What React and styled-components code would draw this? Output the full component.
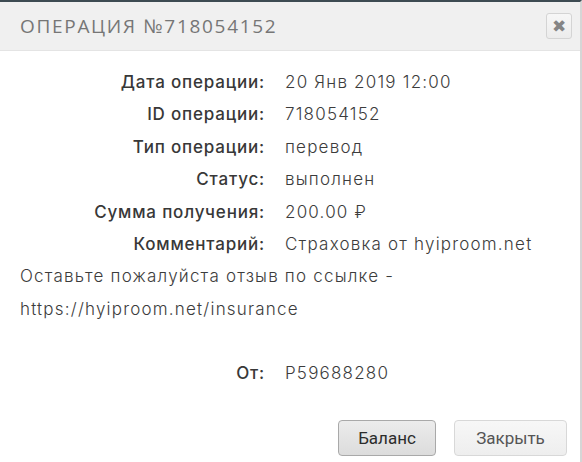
import React from 'react'
import styled, { createGlobalStyle } from 'styled-components'

const GlobalStyle = createGlobalStyle`
  html, body {
    margin: 0;
    padding: 0;
    background: #ffffff;
  }
  body {
    font-family: Inter, "Noto Sans", sans-serif;
  }
`

const Dialog = styled.div`
  width: 582px;
  height: 462px;
  box-sizing: border-box;
  border-top: 2px solid #3d4b52;
  border-right: 2px solid #d6d6d6;
  background: #fff;
  display: flex;
  flex-direction: column;
  overflow: hidden;
`

const TitleBar = styled.div`
  height: 48px;
  background: #f0f0f0;
  display: flex;
  align-items: center;
  justify-content: space-between;
  padding: 0 8px 0 20px;
  border-bottom: 1px solid #e4e4e4;
`

const Title = styled.h1`
  margin: 0;
  font-family: "Open Sans", sans-serif;
  font-weight: 400;
  font-size: 19px;
  letter-spacing: 1.7px;
  color: #767676;
`

const CloseButton = styled.button`
  width: 26px;
  height: 26px;
  padding: 0;
  border: 1px solid #d4d4d4;
  border-radius: 3px;
  background: linear-gradient(#f7f7f7, #ececec);
  display: flex;
  align-items: center;
  justify-content: center;
  color: #858585;
  font-size: 17px;
  line-height: 1;
`

const Body = styled.div`
  flex: 1;
  padding: 15px 20px 0;
  color: #3a3a3a;
  font-size: 17px;
`

const Grid = styled.div`
  display: grid;
  grid-template-columns: 245px 1fr;
  column-gap: 20px;
  line-height: 32.4px;
`

const Label = styled.div`
  text-align: right;
  font-weight: 500;
  letter-spacing: 0.8px;
  color: #383838;
`

const Value = styled.div`
  font-weight: 300;
  letter-spacing: 1.2px;
  color: #3c3c3c;
`

const Note = styled.p`
  margin: 0 0 32px;
  font-weight: 300;
  letter-spacing: 1.2px;
  line-height: 32.4px;
  color: #3c3c3c;
`

const Footer = styled.div`
  display: flex;
  justify-content: flex-end;
  gap: 18px;
  padding: 0 13px 6px 0;
`

const Button = styled.button`
  height: 36px;
  padding: 0 ${(p) => (p.$wide ? 20 : 19)}px;
  min-width: ${(p) => (p.$wide ? 113 : 98)}px;
  font-family: Roboto, "Liberation Sans", sans-serif;
  font-size: 17px;
  border-radius: 4px;
  border: 1px solid ${(p) => (p.$primary ? '#a9a9a9' : '#d8d8d8')};
  color: ${(p) => (p.$primary ? '#2c2c2c' : '#555')};
  background: ${(p) =>
    p.$primary
      ? 'linear-gradient(#ececec, #dcdcdc)'
      : 'linear-gradient(#f7f7f7, #eeeeee)'};
`

const rows = [
  ['Дата операции:', '20 Янв 2019 12:00'],
  ['ID операции:', '718054152'],
  ['Тип операции:', 'перевод'],
  ['Статус:', 'выполнен'],
  ['Сумма получения:', '200.00 ₽'],
  ['Комментарий:', 'Страховка от hyiproom.net'],
]

export default function App() {
  return (
    <>
      <GlobalStyle />
      <Dialog>
        <TitleBar>
          <Title>ОПЕРАЦИЯ №718054152</Title>
          <CloseButton aria-label="close">✖</CloseButton>
        </TitleBar>
        <Body>
          <Grid>
            {rows.map(([l, v]) => (
              <React.Fragment key={l}>
                <Label>{l}</Label>
                <Value>{v}</Value>
              </React.Fragment>
            ))}
          </Grid>
          <Note>
            Оставьте пожалуйста отзыв по ссылке -<br />
            https://hyiproom.net/insurance
          </Note>
          <Grid>
            <Label>От:</Label>
            <Value>P59688280</Value>
          </Grid>
        </Body>
        <Footer>
          <Button $primary>Баланс</Button>
          <Button $wide>Закрыть</Button>
        </Footer>
      </Dialog>
    </>
  )
}
